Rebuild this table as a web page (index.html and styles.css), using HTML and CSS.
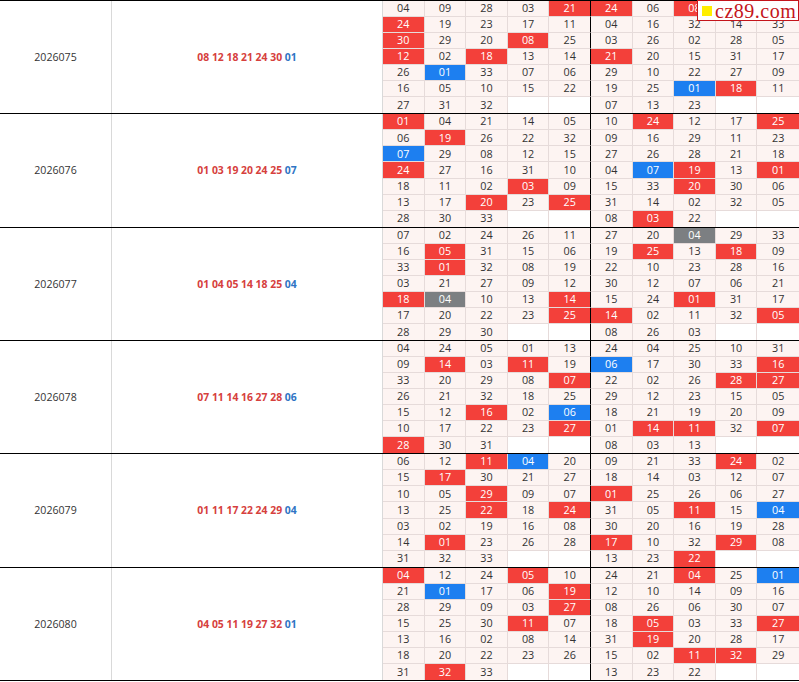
FILE: index.html
```html
<!DOCTYPE html>
<html>
<head>
<meta charset="utf-8">
<link rel="stylesheet" href="styles.css">
</head>
<body>
<div class="table">
  <div class="block">
    <div class="period">2026075</div>
    <div class="draw"><span class="draw-text"><span class="red">08 12 18 21 24 30</span> <span class="blue">01</span></span></div>
    <div class="grid">
      <span class="c">04</span><span class="c">09</span><span class="c">28</span><span class="c">03</span><span class="c r">21</span><span class="c r">24</span><span class="c">06</span><span class="c r">08</span><span class="c r">12</span><span class="c r">30</span>
      <span class="c r">24</span><span class="c">19</span><span class="c">23</span><span class="c">17</span><span class="c">11</span><span class="c">04</span><span class="c">16</span><span class="c">32</span><span class="c">14</span><span class="c">33</span>
      <span class="c r">30</span><span class="c">29</span><span class="c">20</span><span class="c r">08</span><span class="c">25</span><span class="c">03</span><span class="c">26</span><span class="c">02</span><span class="c">28</span><span class="c">05</span>
      <span class="c r">12</span><span class="c">02</span><span class="c r">18</span><span class="c">13</span><span class="c">14</span><span class="c r">21</span><span class="c">20</span><span class="c">15</span><span class="c">31</span><span class="c">17</span>
      <span class="c">26</span><span class="c b">01</span><span class="c">33</span><span class="c">07</span><span class="c">06</span><span class="c">29</span><span class="c">10</span><span class="c">22</span><span class="c">27</span><span class="c">09</span>
      <span class="c">16</span><span class="c">05</span><span class="c">10</span><span class="c">15</span><span class="c">22</span><span class="c">19</span><span class="c">25</span><span class="c b">01</span><span class="c r">18</span><span class="c">11</span>
      <span class="c">27</span><span class="c">31</span><span class="c">32</span><span class="c e"></span><span class="c e"></span><span class="c">07</span><span class="c">13</span><span class="c">23</span><span class="c e"></span><span class="c e"></span>
    </div>
  </div>
  <div class="block">
    <div class="period">2026076</div>
    <div class="draw"><span class="draw-text"><span class="red">01 03 19 20 24 25</span> <span class="blue">07</span></span></div>
    <div class="grid">
      <span class="c r">01</span><span class="c">04</span><span class="c">21</span><span class="c">14</span><span class="c">05</span><span class="c">10</span><span class="c r">24</span><span class="c">12</span><span class="c">17</span><span class="c r">25</span>
      <span class="c">06</span><span class="c r">19</span><span class="c">26</span><span class="c">22</span><span class="c">32</span><span class="c">09</span><span class="c">16</span><span class="c">29</span><span class="c">11</span><span class="c">23</span>
      <span class="c b">07</span><span class="c">29</span><span class="c">08</span><span class="c">12</span><span class="c">15</span><span class="c">27</span><span class="c">26</span><span class="c">28</span><span class="c">21</span><span class="c">18</span>
      <span class="c r">24</span><span class="c">27</span><span class="c">16</span><span class="c">31</span><span class="c">10</span><span class="c">04</span><span class="c b">07</span><span class="c r">19</span><span class="c">13</span><span class="c r">01</span>
      <span class="c">18</span><span class="c">11</span><span class="c">02</span><span class="c r">03</span><span class="c">09</span><span class="c">15</span><span class="c">33</span><span class="c r">20</span><span class="c">30</span><span class="c">06</span>
      <span class="c">13</span><span class="c">17</span><span class="c r">20</span><span class="c">23</span><span class="c r">25</span><span class="c">31</span><span class="c">14</span><span class="c">02</span><span class="c">32</span><span class="c">05</span>
      <span class="c">28</span><span class="c">30</span><span class="c">33</span><span class="c e"></span><span class="c e"></span><span class="c">08</span><span class="c r">03</span><span class="c">22</span><span class="c e"></span><span class="c e"></span>
    </div>
  </div>
  <div class="block">
    <div class="period">2026077</div>
    <div class="draw"><span class="draw-text"><span class="red">01 04 05 14 18 25</span> <span class="blue">04</span></span></div>
    <div class="grid">
      <span class="c">07</span><span class="c">02</span><span class="c">24</span><span class="c">26</span><span class="c">11</span><span class="c">27</span><span class="c">20</span><span class="c g">04</span><span class="c">29</span><span class="c">33</span>
      <span class="c">16</span><span class="c r">05</span><span class="c">31</span><span class="c">15</span><span class="c">06</span><span class="c">19</span><span class="c r">25</span><span class="c">13</span><span class="c r">18</span><span class="c">09</span>
      <span class="c">33</span><span class="c r">01</span><span class="c">32</span><span class="c">08</span><span class="c">19</span><span class="c">22</span><span class="c">10</span><span class="c">23</span><span class="c">28</span><span class="c">16</span>
      <span class="c">03</span><span class="c">21</span><span class="c">27</span><span class="c">09</span><span class="c">12</span><span class="c">30</span><span class="c">12</span><span class="c">07</span><span class="c">06</span><span class="c">21</span>
      <span class="c r">18</span><span class="c g">04</span><span class="c">10</span><span class="c">13</span><span class="c r">14</span><span class="c">15</span><span class="c">24</span><span class="c r">01</span><span class="c">31</span><span class="c">17</span>
      <span class="c">17</span><span class="c">20</span><span class="c">22</span><span class="c">23</span><span class="c r">25</span><span class="c r">14</span><span class="c">02</span><span class="c">11</span><span class="c">32</span><span class="c r">05</span>
      <span class="c">28</span><span class="c">29</span><span class="c">30</span><span class="c e"></span><span class="c e"></span><span class="c">08</span><span class="c">26</span><span class="c">03</span><span class="c e"></span><span class="c e"></span>
    </div>
  </div>
  <div class="block">
    <div class="period">2026078</div>
    <div class="draw"><span class="draw-text"><span class="red">07 11 14 16 27 28</span> <span class="blue">06</span></span></div>
    <div class="grid">
      <span class="c">04</span><span class="c">24</span><span class="c">05</span><span class="c">01</span><span class="c">13</span><span class="c">24</span><span class="c">04</span><span class="c">25</span><span class="c">10</span><span class="c">31</span>
      <span class="c">09</span><span class="c r">14</span><span class="c">03</span><span class="c r">11</span><span class="c">19</span><span class="c b">06</span><span class="c">17</span><span class="c">30</span><span class="c">33</span><span class="c r">16</span>
      <span class="c">33</span><span class="c">20</span><span class="c">29</span><span class="c">08</span><span class="c r">07</span><span class="c">22</span><span class="c">02</span><span class="c">26</span><span class="c r">28</span><span class="c r">27</span>
      <span class="c">26</span><span class="c">21</span><span class="c">32</span><span class="c">18</span><span class="c">25</span><span class="c">29</span><span class="c">12</span><span class="c">23</span><span class="c">15</span><span class="c">05</span>
      <span class="c">15</span><span class="c">12</span><span class="c r">16</span><span class="c">02</span><span class="c b">06</span><span class="c">18</span><span class="c">21</span><span class="c">19</span><span class="c">20</span><span class="c">09</span>
      <span class="c">10</span><span class="c">17</span><span class="c">22</span><span class="c">23</span><span class="c r">27</span><span class="c">01</span><span class="c r">14</span><span class="c r">11</span><span class="c">32</span><span class="c r">07</span>
      <span class="c r">28</span><span class="c">30</span><span class="c">31</span><span class="c e"></span><span class="c e"></span><span class="c">08</span><span class="c">03</span><span class="c">13</span><span class="c e"></span><span class="c e"></span>
    </div>
  </div>
  <div class="block">
    <div class="period">2026079</div>
    <div class="draw"><span class="draw-text"><span class="red">01 11 17 22 24 29</span> <span class="blue">04</span></span></div>
    <div class="grid">
      <span class="c">06</span><span class="c">12</span><span class="c r">11</span><span class="c b">04</span><span class="c">20</span><span class="c">09</span><span class="c">21</span><span class="c">33</span><span class="c r">24</span><span class="c">02</span>
      <span class="c">15</span><span class="c r">17</span><span class="c">30</span><span class="c">21</span><span class="c">27</span><span class="c">18</span><span class="c">14</span><span class="c">03</span><span class="c">12</span><span class="c">07</span>
      <span class="c">10</span><span class="c">05</span><span class="c r">29</span><span class="c">09</span><span class="c">07</span><span class="c r">01</span><span class="c">25</span><span class="c">26</span><span class="c">06</span><span class="c">27</span>
      <span class="c">13</span><span class="c">25</span><span class="c r">22</span><span class="c">18</span><span class="c r">24</span><span class="c">31</span><span class="c">05</span><span class="c r">11</span><span class="c">15</span><span class="c b">04</span>
      <span class="c">03</span><span class="c">02</span><span class="c">19</span><span class="c">16</span><span class="c">08</span><span class="c">30</span><span class="c">20</span><span class="c">16</span><span class="c">19</span><span class="c">28</span>
      <span class="c">14</span><span class="c r">01</span><span class="c">23</span><span class="c">26</span><span class="c">28</span><span class="c r">17</span><span class="c">10</span><span class="c">32</span><span class="c r">29</span><span class="c">08</span>
      <span class="c">31</span><span class="c">32</span><span class="c">33</span><span class="c e"></span><span class="c e"></span><span class="c">13</span><span class="c">23</span><span class="c r">22</span><span class="c e"></span><span class="c e"></span>
    </div>
  </div>
  <div class="block last">
    <div class="period">2026080</div>
    <div class="draw"><span class="draw-text"><span class="red">04 05 11 19 27 32</span> <span class="blue">01</span></span></div>
    <div class="grid">
      <span class="c r">04</span><span class="c">12</span><span class="c">24</span><span class="c r">05</span><span class="c">10</span><span class="c">24</span><span class="c">21</span><span class="c r">04</span><span class="c">25</span><span class="c b">01</span>
      <span class="c">21</span><span class="c b">01</span><span class="c">17</span><span class="c">06</span><span class="c r">19</span><span class="c">12</span><span class="c">10</span><span class="c">14</span><span class="c">09</span><span class="c">16</span>
      <span class="c">28</span><span class="c">29</span><span class="c">09</span><span class="c">03</span><span class="c r">27</span><span class="c">08</span><span class="c">26</span><span class="c">06</span><span class="c">30</span><span class="c">07</span>
      <span class="c">15</span><span class="c">25</span><span class="c">30</span><span class="c r">11</span><span class="c">07</span><span class="c">18</span><span class="c r">05</span><span class="c">03</span><span class="c">33</span><span class="c r">27</span>
      <span class="c">13</span><span class="c">16</span><span class="c">02</span><span class="c">08</span><span class="c">14</span><span class="c">31</span><span class="c r">19</span><span class="c">20</span><span class="c">28</span><span class="c">17</span>
      <span class="c">18</span><span class="c">20</span><span class="c">22</span><span class="c">23</span><span class="c">26</span><span class="c">15</span><span class="c">02</span><span class="c r">11</span><span class="c r">32</span><span class="c">29</span>
      <span class="c">31</span><span class="c r">32</span><span class="c">33</span><span class="c e"></span><span class="c e"></span><span class="c">13</span><span class="c">23</span><span class="c">22</span><span class="c e"></span><span class="c e"></span>
    </div>
  </div>
</div>
<div class="mark"><span class="sq"></span><span class="mark-text">cz89.com</span></div>
</body>
</html>
```
FILE: styles.css
```css
html, body {
  margin: 0;
  padding: 0;
  background: #fff;
}
body {
  font-family: "Open Sans", "Noto Sans", "DejaVu Sans", sans-serif;
  font-size: 10.8px;
  color: #333;
  position: relative;
  width: 799px;
  overflow: hidden;
}
.table {
  width: 799px;
}
.block {
  display: grid;
  grid-template-columns: 112px 271px 1fr;
  height: 113.33px;
  box-sizing: border-box;
  border-top: 1px solid #000;
}
.block.last {
  height: 114.33px;
  border-bottom: 1px solid #000;
}
.period {
  display: flex;
  align-items: center;
  justify-content: center;
  border-right: 1px solid #d9d9d9;
  font-size: 10.6px;
  color: #333;
}
.draw {
  display: flex;
  align-items: center;
  justify-content: center;
  border-right: 1px solid #d9d9d9;
  font-weight: 700;
  font-size: 10.4px;
}
.draw-text {
  white-space: pre;
}
.red {
  color: #d6403d;
}
.blue {
  color: #2f74c4;
}
.grid {
  display: grid;
  grid-template-columns: repeat(10, 1fr);
  grid-template-rows: repeat(7, 1fr);
}
.c {
  display: flex;
  align-items: center;
  justify-content: center;
  background: #fdf4f2;
  border-right: 1px solid #e6dbda;
  border-bottom: 1px solid #e6dbda;
  font-size: 10.8px;
  line-height: 1;
  color: #333;
}
.c:nth-child(10n+5) {
  border-right-color: #000;
}
.c:nth-child(10n) {
  border-right: none;
}
.c:nth-child(n+61) {
  border-bottom: none;
}
.c.r {
  background: #f3403a;
  color: #fff;
}
.c.b {
  background: #1d7ff0;
  color: #fff;
}
.c.g {
  background: #7c7f82;
  color: #fff;
}
.c.e {
  background: #fff;
}
.mark {
  position: absolute;
  top: 0;
  left: 697px;
  width: 102px;
  height: 21px;
  box-sizing: border-box;
  border: 1px solid #c4141b;
  background: #fff;
  display: flex;
  align-items: center;
  gap: 3px;
  padding-left: 4px;
}
.sq {
  width: 10px;
  height: 10px;
  background: #ffee00;
  flex: none;
}
.mark-text {
  font-family: "Liberation Serif", "DejaVu Serif", serif;
  font-size: 20px;
  line-height: 1;
  color: #c4141b;
  letter-spacing: 0.5px;
}
```
